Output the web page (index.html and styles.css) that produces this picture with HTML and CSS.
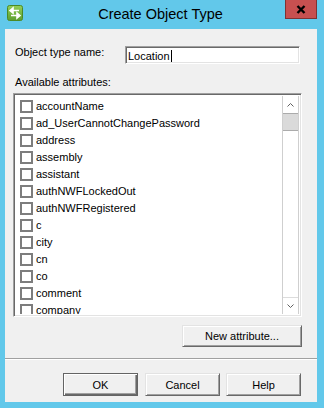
FILE: index.html
```html
<!DOCTYPE html>
<html>
<head>
    <title>Create Object Type</title>
    <link rel="stylesheet" href="styles.css">
</head>
<body>
    <div class="window">
        <div class="titlebar">
            <svg class="app-icon" width="16" height="16" viewBox="0 0 16 16">
                <defs>
                    <linearGradient id="iconFill" x1="0" y1="0" x2="0" y2="1">
                        <stop offset="0" stop-color="#93cf5a"/>
                        <stop offset="1" stop-color="#5c9e2e"/>
                    </linearGradient>
                </defs>
                <rect x="0.5" y="0.5" width="15" height="15" rx="2" fill="url(#iconFill)" stroke="#4b8a27"/>
                <path d="M12 5.5H5.5M3 5.5l3-2.5v5z" stroke="#fff" stroke-width="1.6" fill="#fff"/>
                <path d="M4 10.5h6.5M13 10.5l-3-2.5v5z" stroke="#fff" stroke-width="1.6" fill="#fff"/>
            </svg>
            <div class="title">Create Object Type</div>
            <div class="close-btn">
                <svg width="10" height="9" viewBox="0 0 10 9">
                    <path d="M1.5 1l7 7M8.5 1l-7 7" stroke="#000" stroke-width="2.4"/>
                </svg>
            </div>
        </div>

        <div class="client">
            <div class="name-row">
                <label class="name-label">Object type name:</label>
                <div class="textbox"><span class="caret">Location</span></div>
            </div>

            <div class="list-label">Available attributes:</div>
            <div class="listbox">
                <ul class="items">
                    <li><span class="check"></span>accountName</li>
                    <li><span class="check"></span>ad_UserCannotChangePassword</li>
                    <li><span class="check"></span>address</li>
                    <li><span class="check"></span>assembly</li>
                    <li><span class="check"></span>assistant</li>
                    <li><span class="check"></span>authNWFLockedOut</li>
                    <li><span class="check"></span>authNWFRegistered</li>
                    <li><span class="check"></span>c</li>
                    <li><span class="check"></span>city</li>
                    <li><span class="check"></span>cn</li>
                    <li><span class="check"></span>co</li>
                    <li><span class="check"></span>comment</li>
                    <li><span class="check"></span>company</li>
                </ul>
                <div class="scrollbar">
                    <div class="sb-btn">
                        <svg width="7" height="4" viewBox="0 0 7 4"><path d="M0.5 3.5l3-3 3 3" stroke="#606060" fill="none"/></svg>
                    </div>
                    <div class="sb-thumb"></div>
                    <div class="sb-track"></div>
                    <div class="sb-btn sb-down">
                        <svg width="7" height="4" viewBox="0 0 7 4"><path d="M0.5 0.5l3 3 3-3" stroke="#606060" fill="none"/></svg>
                    </div>
                </div>
            </div>

            <div class="new-row">
                <button class="btn btn-wide">New attribute...</button>
            </div>

            <div class="separator"></div>

            <div class="footer">
                <button class="btn btn-default">OK</button>
                <button class="btn">Cancel</button>
                <button class="btn">Help</button>
            </div>
        </div>
    </div>
</body>
</html>
```

FILE: styles.css
```css
body {
    margin: 0;
    background-color: #62c8ea;
    font-family: "Liberation Sans", Arial, sans-serif;
    font-size: 11px;
    color: #000;
}
.window {
    width: 324px;
    height: 408px;
    display: flex;
    flex-direction: column;
}

/* title bar */
.titlebar {
    height: 29px;
    display: flex;
    align-items: flex-start;
}
.app-icon {
    margin: 5px 0 0 7px;
    flex: none;
}
.title {
    flex: 1;
    padding-left: 13px;
    text-align: center;
    font-size: 14.5px;
    line-height: 28px;
    color: #000;
}
.close-btn {
    width: 30px;
    height: 18px;
    margin-right: 7px;
    background-color: #c75050;
    border: 1px solid #7f3333;
    border-top: none;
    display: flex;
    align-items: center;
    justify-content: center;
}

/* dialog body */
.client {
    flex: 1;
    margin: 0 7px 6px 5px;
    padding: 17px 15px 0 8px;
    background-color: #f0f0f0;
}
.name-row {
    display: flex;
    align-items: flex-start;
}
.name-label {
    width: 110px;
    padding-left: 2px;
    line-height: 13px;
}
.textbox {
    width: 175px;
    height: 18px;
    box-sizing: border-box;
    background: #fff;
    border: 1px solid;
    border-color: #a0a0a0 #fff #fff #a0a0a0;
    box-shadow: inset 1px 1px #696969, inset -1px -1px #e3e3e3;
    padding: 3px 0 0 2px;
    font-size: 11px;
    line-height: 12px;
}
.caret {
    border-right: 1px solid #000;
    padding-right: 1px;
}
.list-label {
    margin-top: 12px;
    padding-left: 2px;
    line-height: 13px;
}

.listbox {
    margin-top: 4px;
    height: 224px;
    box-sizing: border-box;
    display: flex;
    background: #fff;
    border: 1px solid;
    border-color: #a0a0a0 #fff #fff #a0a0a0;
    box-shadow: inset 1px 1px #696969, inset -1px -1px #e3e3e3;
    padding: 2px 2px 2px 2px;
}
.items {
    flex: 1;
    list-style-type: none;
    margin: 0;
    padding: 2px 0 0 4px;
    overflow: hidden;
}
.items li {
    height: 17px;
    line-height: 17px;
    display: flex;
    align-items: center;
    white-space: nowrap;
}
.check {
    width: 13px;
    height: 13px;
    box-sizing: border-box;
    border: 2px solid #7d7d7d;
    background: #fff;
    margin-right: 3px;
    flex: none;
}

.scrollbar {
    width: 17px;
    box-sizing: border-box;
    display: flex;
    flex-direction: column;
    border-left: 1px solid #cfcfcf;
    border-right: 1px solid #cfcfcf;
}
.sb-btn {
    height: 17px;
    box-sizing: border-box;
    display: flex;
    align-items: center;
    justify-content: center;
    flex: none;
}
.sb-down {
    border-top: 1px solid #dcdcdc;
}
.sb-thumb {
    height: 18px;
    box-sizing: border-box;
    background: #dadada;
    border-top: 1px solid #ababab;
    border-bottom: 1px solid #ababab;
}
.sb-track {
    flex: 1;
}

/* buttons */
.new-row {
    display: flex;
    justify-content: flex-end;
    margin-top: 8px;
}
.btn {
    height: 23px;
    width: 75px;
    padding: 0;
    font-family: "Liberation Sans", Arial, sans-serif;
    font-size: 11px;
    color: #000;
    background-color: #f0f0f0;
    border: 1px solid;
    border-color: #e3e3e3 #696969 #696969 #e3e3e3;
    box-shadow: inset 1px 1px #fff, inset -1px -1px #a0a0a0;
}
.btn-wide {
    width: 120px;
    height: 22px;
}
.btn-default {
    border-color: #646464;
    box-shadow: inset 1px 1px #fff, inset -1px -1px #696969, inset -2px -2px #a0a0a0;
}

.separator {
    margin: 11px -15px 0 -8px;
    border-top: 1px solid #a0a0a0;
    border-bottom: 1px solid #fff;
}
.footer {
    display: flex;
    justify-content: flex-end;
    gap: 6px;
    margin-top: 13px;
    padding-right: 1px;
}
.footer .btn-default {
    margin-right: 1px;
}
```
